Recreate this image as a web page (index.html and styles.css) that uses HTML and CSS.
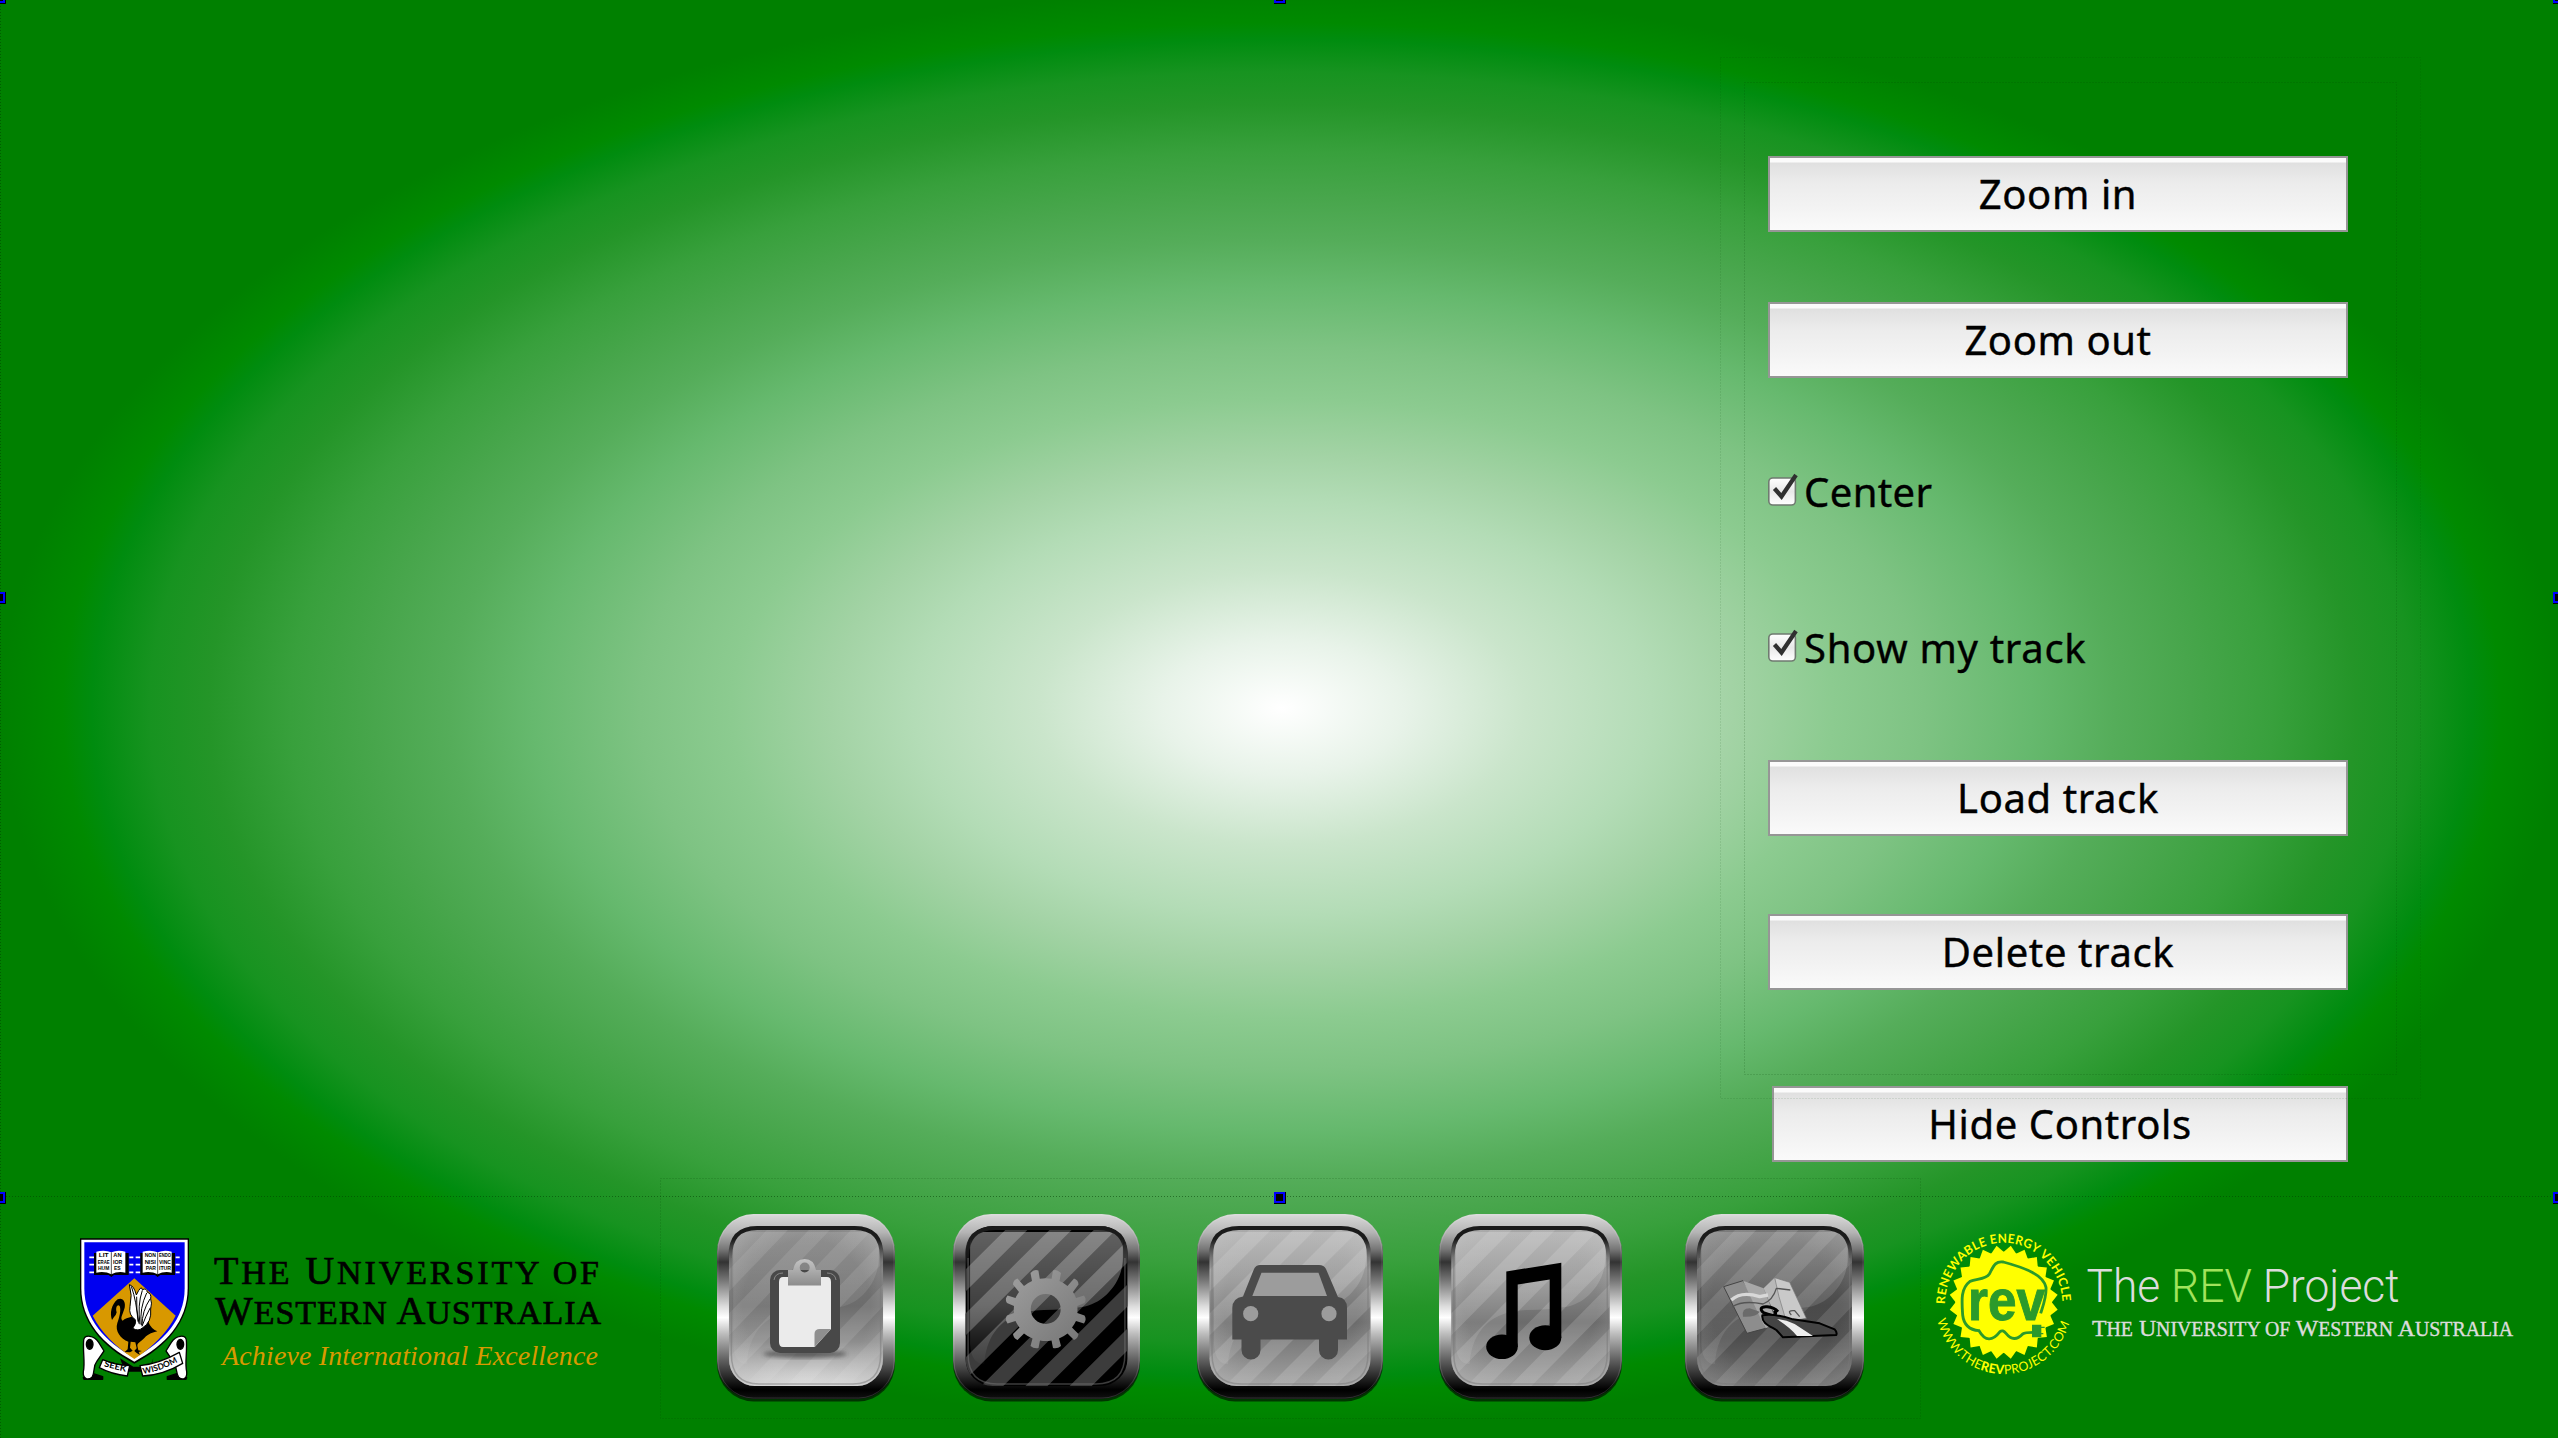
FILE: index.html
```html
<!DOCTYPE html>
<html lang="en">
<head>
<meta charset="utf-8">
<title>REV Project</title>
<link rel="stylesheet" href="styles.css">
</head>
<body>
<svg class="defs" width="0" height="0" aria-hidden="true">
  <defs>
    <linearGradient id="metal" x1="0" y1="0" x2="0" y2="1">
      <stop offset="0" stop-color="#dadada"/><stop offset=".1" stop-color="#b4b4b4"/>
      <stop offset=".19" stop-color="#777"/><stop offset=".26" stop-color="#333"/>
      <stop offset=".36" stop-color="#777"/><stop offset=".5" stop-color="#ddd"/>
      <stop offset=".56" stop-color="#fff"/><stop offset=".65" stop-color="#bbb"/>
      <stop offset=".78" stop-color="#666"/><stop offset=".9" stop-color="#1c1c1c"/>
      <stop offset=".95" stop-color="#000"/><stop offset="1" stop-color="#111"/>
    </linearGradient>
    <linearGradient id="face1" x1="0" y1="0" x2="0" y2="1">
      <stop offset="0" stop-color="#808080"/><stop offset=".5" stop-color="#6c6c6c"/>
      <stop offset=".72" stop-color="#8d8d8d"/><stop offset="1" stop-color="#e6e6e6"/>
    </linearGradient>
    <linearGradient id="face3" x1="0" y1="0" x2="0" y2="1">
      <stop offset="0" stop-color="#a8a8a8"/><stop offset=".35" stop-color="#8c8c8c"/>
      <stop offset=".6" stop-color="#6b6b6b"/><stop offset="1" stop-color="#a2a2a2"/>
    </linearGradient>
    <linearGradient id="face5" x1="0" y1="0" x2="0" y2="1">
      <stop offset="0" stop-color="#747474"/><stop offset=".5" stop-color="#4a4a4a"/>
      <stop offset=".7" stop-color="#4e4e4e"/><stop offset="1" stop-color="#707070"/>
    </linearGradient>
    <radialGradient id="rim" cx=".5" cy=".5" r=".68">
      <stop offset=".6" stop-color="#aaa" stop-opacity="0"/><stop offset="1" stop-color="#bbb" stop-opacity=".6"/>
    </radialGradient>
    <linearGradient id="gloss" x1="0" y1="0" x2="0" y2="1">
      <stop offset="0" stop-color="#fff" stop-opacity=".26"/><stop offset="1" stop-color="#fff" stop-opacity=".1"/>
    </linearGradient>
    <linearGradient id="glossDark" x1="0" y1="0" x2="0" y2="1">
      <stop offset="0" stop-color="#fff" stop-opacity=".38"/><stop offset=".55" stop-color="#fff" stop-opacity=".25"/><stop offset="1" stop-color="#fff" stop-opacity=".02"/>
    </linearGradient>
    <linearGradient id="lipFade" gradientUnits="userSpaceOnUse" x1="0" y1="12" x2="0" y2="56">
      <stop offset="0" stop-color="#1a1a1a"/><stop offset=".3" stop-color="#1a1a1a"/><stop offset="1" stop-color="#444" stop-opacity="0"/>
    </linearGradient>
    <linearGradient id="steel" x1="0" y1="0" x2="1" y2="1">
      <stop offset="0" stop-color="#a0a0a0"/><stop offset="1" stop-color="#747474"/>
    </linearGradient>
    <linearGradient id="clip" x1="0" y1="0" x2="0" y2="1">
      <stop offset="0" stop-color="#c4c4c4"/><stop offset="1" stop-color="#8c8c8c"/>
    </linearGradient>
    <linearGradient id="box" x1="0" y1="0" x2="0" y2="1">
      <stop offset="0" stop-color="#fff"/><stop offset=".5" stop-color="#e8e8e8"/><stop offset="1" stop-color="#fff"/>
    </linearGradient>
    <filter id="soft" x="-20%" y="-20%" width="140%" height="140%"><feGaussianBlur stdDeviation="2"/></filter>
    <clipPath id="faceClip"><rect x="12.5" y="12" width="161" height="160" rx="27"/></clipPath>
    <g id="bezel">
      <rect x="0" y="1.5" width="186" height="186" rx="38" fill="#000" opacity=".6"/>
      <rect width="186" height="185" rx="38" fill="url(#metal)"/>
      <rect x="1" y="1" width="184" height="183" rx="37" fill="none" stroke="#fff" stroke-opacity=".14"/>
    </g>
    <path id="stripes" d="M-60 172L100 12h22L-38 172zM-16 172L144 12h22L6 172zM28 172L188 12h22L50 172zM72 172L232 12h22L94 172zM116 172L276 12h22L138 172zM-104 172L56 12h22L-82 172z"/>
    <path id="glossShape" d="M17 18H169V44C169 68 150 90 128 93Q110 96 90 96C55 97 34 114 31 150Q18 150 17 130z"/>
    <g id="lip">
      <path d="M14 56V42Q14 14 42 14H144Q172 14 172 42V56" fill="none" stroke="url(#lipFade)" stroke-width="4"/>
      <path d="M15 44V140Q15 170 44 170H142Q171 170 171 140V44" fill="none" stroke="#777" stroke-opacity=".5" stroke-width="1.5"/>
    </g>
    <g id="check">
      <rect x=".8" y="5" width="26.6" height="27" rx="4" fill="url(#box)" stroke="#6f7a70" stroke-width="1.6"/>
      <path d="M6.5 15.5L13.5 23.5L28 2" fill="none" stroke="#303030" stroke-width="4.2"/>
    </g>
  </defs>
</svg>

<main class="stage">
  <form class="controls">
    <button class="btn" type="button">Zoom in</button>
    <button class="btn zoom-out" type="button">Zoom out</button>
    <label class="option center"><svg width="32" height="34"><use href="#check"/></svg><span>Center</span></label>
    <label class="option show"><svg width="32" height="34"><use href="#check"/></svg><span class="show-text">Show my track</span></label>
    <button class="btn load" type="button">Load track</button>
    <button class="btn delete" type="button">Delete track</button>
    <button class="btn hide" type="button">Hide Controls</button>
  </form>
</main>

<footer class="bar">
  <svg class="uwa" width="560" height="190" viewBox="0 0 560 190">
    <g transform="translate(10 15) scale(.33333)">
      <path d="M150 400L190 425H240L250 400L240 440H165z" fill="#000"/>
      <!-- ribbon -->
      <g fill="#fff" stroke="#000" stroke-width="4" stroke-linejoin="round">
        <path d="M40 458L70 446L98 455V463H42z" fill="#000"/><path d="M350 458L320 446L292 455V463H348z" fill="#000"/>
        <path d="M41 345C44 328 72 330 86 352L102 378L80 410C68 425 76 440 66 457C52 468 38 460 40 440C46 415 38 380 41 345z"/>
        <path d="M349 345C346 328 318 330 304 352L288 378L310 410C322 425 316 440 326 457C340 468 352 460 350 440C344 415 352 380 349 345z"/>
        <path d="M98 404Q135 420 179 422L172 453Q125 448 88 428z"/>
        <path d="M210 422Q270 415 328 382L338 415Q280 450 218 453z"/>
        <ellipse cx="59" cy="358" rx="10" ry="15" fill="#000"/><ellipse cx="331" cy="358" rx="10" ry="15" fill="#000"/>
      </g>
      <path d="M30 40H357V190C357 290 290 365 193 416C95 365 30 290 30 190z" fill="#000"/>
      <path d="M34 44H353V190C353 288 288 360 193 410C98 360 34 288 34 190z" fill="#fff"/>
      <path d="M43 52H344V190C344 282 282 350 193 399C104 350 43 282 43 190z" fill="#0000f0"/>
      <path d="M193 160L317 272Q280 345 193 402Q105 345 68 272z" fill="#d89800"/>
      <!-- books -->
      <g id="book">
        <path d="M58 97h14M58 119h14M58 142h14M178 97h12M178 119h12M178 142h12" stroke="#fff" stroke-width="5"/>
        <path d="M72 84H176V150H132L124 156L116 150H72z" fill="#000"/>
        <path d="M79 80Q105 74 124 82Q143 74 166 80V143Q143 138 124 148Q105 138 79 143z" fill="#fff"/>
        <path d="M124 82V148" stroke="#000" stroke-width="2"/>
      </g>
      <use href="#book" x="139"/>
      <g class="book-text">
        <text x="86" y="97" textLength="30" lengthAdjust="spacingAndGlyphs">LIT</text><text x="130" y="97" textLength="25" lengthAdjust="spacingAndGlyphs">AN</text>
        <text x="83" y="117" textLength="36" lengthAdjust="spacingAndGlyphs">ERAE</text><text x="129" y="117" textLength="28" lengthAdjust="spacingAndGlyphs">IOR</text>
        <text x="84" y="136" textLength="34" lengthAdjust="spacingAndGlyphs">HUM</text><text x="132" y="136" textLength="20" lengthAdjust="spacingAndGlyphs">ES</text>
        <text x="224" y="97" textLength="34" lengthAdjust="spacingAndGlyphs">NON</text><text x="267" y="97" textLength="36" lengthAdjust="spacingAndGlyphs">ENDO</text>
        <text x="224" y="117" textLength="34" lengthAdjust="spacingAndGlyphs">NISI</text><text x="267" y="117" textLength="36" lengthAdjust="spacingAndGlyphs">VINC</text>
        <text x="227" y="136" textLength="31" lengthAdjust="spacingAndGlyphs">PAR</text><text x="267" y="136" textLength="36" lengthAdjust="spacingAndGlyphs">ITUR</text>
      </g>
      <!-- swan -->
      <path d="M126 285C119 265 124 238 143 223C158 216 168 230 164 248C158 270 149 279 158 287C164 280 175 278 185 275L235 290Q242 310 262 319Q240 324 228 334C215 350 202 353 202 362L205 376L216 378L206 381L210 390L200 384L193 378L200 370L196 352L182 350L180 368L188 377L180 382L164 381L173 373L175 350C152 342 134 318 142 294C148 278 154 255 149 243C141 236 136 250 140 262Q138 272 132 276z" fill="#000"/>
      <path d="M178 179Q192 182 199 210Q214 178 217 194Q230 188 232 202Q245 205 242 222Q247 232 242 252Q246 292 217 309Q205 320 188 310Q200 295 196 284Q175 270 180 245Q188 210 178 179z" fill="#fff" stroke="#000" stroke-width="3"/>
      <path d="M184 184Q200 230 204 290M200 215Q198 255 207 296M217 196Q202 240 210 298M230 204Q208 250 214 300M240 222Q216 258 216 302M241 248Q226 275 216 304" fill="none" stroke="#000" stroke-width="3"/>
      <g class="motto">
        <text transform="translate(101 424) rotate(14)" textLength="68" lengthAdjust="spacingAndGlyphs">SEEK</text>
        <path id="wisPath" d="M220 447Q275 438 332 406" fill="none"/>
        <text><textPath href="#wisPath">WISDOM</textPath></text>
      </g>
    </g>
    <text class="uwa-name" x="154" y="73.5" textLength="385">T<tspan class="sc">HE</tspan> U<tspan class="sc">NIVERSITY OF</tspan></text>
    <text class="uwa-name" x="155" y="114" textLength="386">W<tspan class="sc">ESTERN</tspan> A<tspan class="sc">USTRALIA</tspan></text>
    <text class="uwa-tag" x="162" y="155" textLength="376">Achieve International Excellence</text>
  </svg>

  <nav class="tiles">
    <svg width="178" height="190" viewBox="0 0 178 190">
      <svg width="178" height="186" viewBox="0 0 186 186" preserveAspectRatio="none" overflow="visible">
        <use href="#bezel"/>
        <g clip-path="url(#faceClip)">
          <rect x="12" y="11" width="163" height="162" fill="url(#face1)"/>
          <use href="#stripes" fill="#fff" opacity=".1"/>
          <rect x="12" y="11" width="163" height="162" fill="url(#rim)"/>
          <use href="#glossShape" fill="url(#gloss)" opacity=".5"/>
        </g>
        <use href="#lip"/>
      </svg>
      <ellipse cx="88" cy="140" rx="42" ry="4" fill="#333" opacity=".6" filter="url(#soft)"/>
      <rect x="53" y="56" width="70" height="83" rx="10" fill="#484848"/>
      <path d="M57 66Q58 59 66 59M119 66Q118 59 110 59" stroke="#888" fill="none"/>
      <path d="M66 63H110Q114 63 114 68V115L97.700 133H66Q62 133 62 128V68Q62 63 66 63z" fill="#ebebeb"/>
      <path d="M114 115H103Q97.500 115 97.500 120V133z" fill="#8f8f8f"/>
      <path fill-rule="evenodd" d="M71 56H76Q78 45 87.700 45Q97 45 99 56H104V71.500H71zM87.700 48.500A5 5 0 1 0 87.700 58.500A5 5 0 1 0 87.700 48.500z" fill="url(#clip)"/>
    </svg>
    <svg class="t2" width="187" height="190" viewBox="0 0 187 190">
      <mask id="hole"><rect width="187" height="190" fill="#fff"/><circle cx="92.700" cy="95" r="15" fill="#000"/></mask>
      <svg width="187" height="186" viewBox="0 0 186 186" preserveAspectRatio="none" overflow="visible">
        <use href="#bezel"/>
        <g clip-path="url(#faceClip)">
          <rect x="12" y="11" width="163" height="162" fill="#000"/>
          <use href="#stripes" fill="#3c3c3c"/>
          <use href="#glossShape" fill="url(#glossDark)"/>
        </g>
        <use href="#lip"/>
      </svg>
      <g fill="url(#steel)" mask="url(#hole)">
        <path d="M85.400 56.500L86.800 64.800A31 31 0 0 1 98.600 64.800L100 56.500Q103.500 55 108 59L106.500 67A31 31 0 0 1 114.500 72L121 64.500Q125.500 66 125.500 70.500L120 78A31 31 0 0 1 123 84L131 81.500Q134 85.500 131.500 89L124.300 92A31 31 0 0 1 124.300 99L131.500 101.500Q134 105.500 131 109.500L123 107A31 31 0 0 1 119 113.500L125.500 120Q125 124.500 121 126L114.500 119.500A31 31 0 0 1 106 124.500L108 132Q104.500 135 100 134L98.500 126.500A31 31 0 0 1 87 126.500L85.500 134Q81 135 77.500 132L79.500 124.500A31 31 0 0 1 71 119.500L64.500 126Q60.500 124.500 60 120L66.500 113.500A31 31 0 0 1 62.500 107L54.500 109.500Q51.500 105.500 54 101.500L61 99A31 31 0 0 1 61 92L54 89Q51.500 85.500 54.500 81.500L62.500 84A31 31 0 0 1 66 78L60 70.500Q60 66 64.500 64.500L71 72A31 31 0 0 1 79 67L77.500 59Q81 55 85.400 56.500z"/>
      </g>
    </svg>
    <svg class="t3" width="186" height="190" viewBox="0 0 186 190">
      <use href="#bezel"/>
      <g clip-path="url(#faceClip)">
        <rect x="12" y="11" width="163" height="162" fill="url(#face3)"/>
        <use href="#stripes" fill="#fff" opacity=".15"/>
        <rect x="12" y="11" width="163" height="162" fill="url(#rim)"/>
        <use href="#glossShape" fill="url(#gloss)" opacity=".8"/>
      </g>
      <use href="#lip"/>
      <path d="M63 51H122Q127 51 129 55L141 83Q150 84 150 94V125.500H141V136A9.500 9.500 0 0 1 122 136V125.500H63.500V136A9.500 9.500 0 0 1 44.500 136V125.500H35.300V94Q35.500 84 46 82.500L57 55Q59 51 63 51z" fill="#4b4b4b"/>
      <path d="M64.500 58.700H121.500L130 82H55.300z" fill="#9c9c9c"/>
      <circle cx="53.700" cy="99.700" r="7.600" fill="#9c9c9c"/><circle cx="132" cy="99.700" r="7.600" fill="#9c9c9c"/>
    </svg>
    <svg class="t4" width="183" height="190" viewBox="0 0 183 190">
      <svg width="183" height="186" viewBox="0 0 186 186" preserveAspectRatio="none" overflow="visible">
        <use href="#bezel"/>
        <g clip-path="url(#faceClip)">
          <rect x="12" y="11" width="163" height="162" fill="url(#face3)"/>
          <use href="#stripes" fill="#fff" opacity=".15"/>
          <rect x="12" y="11" width="163" height="162" fill="url(#rim)"/>
          <use href="#glossShape" fill="url(#gloss)" opacity=".8"/>
        </g>
        <use href="#lip"/>
      </svg>
      <path d="M67.300 57.500L122.300 48.700V124H110.700V65.500L78.700 70.500V133H67.300z"/>
      <ellipse cx="63" cy="132.700" rx="15.800" ry="12.300"/><ellipse cx="106.300" cy="123.700" rx="16" ry="12.500"/>
    </svg>
    <svg class="t5" width="179" height="190" viewBox="0 0 179 190">
      <svg width="179" height="186" viewBox="0 0 186 186" preserveAspectRatio="none" overflow="visible">
        <use href="#bezel"/>
        <g clip-path="url(#faceClip)">
          <rect x="12" y="11" width="163" height="162" fill="url(#face5)"/>
          <use href="#stripes" fill="#fff" opacity=".12"/>
          <rect x="12" y="11" width="163" height="162" fill="url(#rim)" opacity=".5"/>
          <use href="#glossShape" fill="url(#gloss)" opacity=".7"/>
        </g>
        <use href="#lip"/>
      </svg>
      <g transform="scale(.33333) translate(-76 -42)" stroke-linejoin="round">
        <path d="M192 260L250 242L305 330L318 385L262 400z" fill="#8d8d8d" stroke="#444" stroke-width="3"/>
        <path d="M250 242L312 265L352 370L318 385L298 345z" fill="#a8a8a8"/>
        <path d="M312 265L345 233L372 310L380 360H352z" fill="#b8b8b8"/>
        <path d="M345 233L390 247L440 355L380 365L358 290z" fill="#c9c9c9" stroke="#777" stroke-width="2"/>
        <path d="M250 350Q245 325 270 325L300 335Q290 352 250 350z" fill="#6b6b6b"/>
        <path d="M215 300Q245 272 300 290L325 285" fill="none" stroke="#d8d8d8" stroke-width="10"/>
        <path d="M218 320Q250 300 310 312Q340 300 350 265L392 270M395 345Q380 330 405 332L420 350" fill="none" stroke="#555" stroke-width="4"/>
        <path d="M355 335C340 318 300 315 305 330C310 345 330 340 340 348C350 342 350 340 344 332" fill="none" stroke="#000" stroke-width="9"/>
        <path d="M308 346C330 342 360 345 400 358L480 370L525 388Q533 396 530 405L370 412L350 390C330 378 305 370 308 346z" fill="#444" stroke="#000" stroke-width="6"/>
        <path d="M352 357Q380 360 405 372L460 408H412Q395 385 352 357z" fill="#eee"/>
      </g>
    </svg>
  </nav>

  <svg class="rev" width="620" height="190" viewBox="0 0 620 190">
    <g transform="translate(83.700 92.300) scale(.955 1)">
      <circle r="50.500" fill="#ff0"/>
      <g fill="#ff0">
        <g id="ray3"><path id="ray" d="M-7.500 -49L0 -57L7.500 -49L0 0z" transform="rotate(7.500)"/><use href="#ray" transform="rotate(15)"/><use href="#ray" transform="rotate(30)"/></g>
        <use href="#ray3" transform="rotate(45)"/><use href="#ray3" transform="rotate(90)"/><use href="#ray3" transform="rotate(135)"/><use href="#ray3" transform="rotate(180)"/><use href="#ray3" transform="rotate(225)"/><use href="#ray3" transform="rotate(270)"/><use href="#ray3" transform="rotate(315)"/>
      </g>
      <path id="arcTop" d="M-61.500 2A61.500 61.500 0 0 1 61.500 2" fill="none"/>
      <path id="arcBottom" d="M-69.500 18A71.800 71.800 0 0 0 69.500 18" fill="none"/>
      <text class="ring" textLength="190"><textPath href="#arcTop">RENEWABLE ENERGY VEHICLE</textPath></text>
      <text class="ring thin" textLength="186"><textPath href="#arcBottom">WWW.THE<tspan class="heavy">REV</tspan>PROJECT.COM</textPath></text>
    </g>
    <text class="rev-word" x="48" y="109.500" textLength="77" lengthAdjust="spacingAndGlyphs">rev</text>
    <g transform="translate(-260 -10) scale(.33333)" fill="none" stroke="#2b9a2b" stroke-width="8.500">
      <path d="M1142 340C1150 315 1160 290 1158 262C1150 225 1100 205 1030 186C1005 182 1000 200 988 222C978 238 952 236 930 244C902 265 905 300 908 345C912 380 932 390 957 392Q985 440 1020 395Q1028 388 1038 400Q1062 430 1088 402Q1095 397 1120 397"/>
      <path d="M1118 376H1142V410H1118zM1140 382H1154M1140 401H1150" fill="#2b9a2b" stroke-width="4"/>
    </g>
    <text class="rev-title" x="166.500" y="92.300" textLength="313" lengthAdjust="spacingAndGlyphs">The <tspan class="lime">REV</tspan> Project</text>
    <text class="rev-sub" x="172" y="126.300" textLength="421" lengthAdjust="spacingAndGlyphs">T<tspan class="sc2">HE</tspan> U<tspan class="sc2">NIVERSITY OF</tspan> W<tspan class="sc2">ESTERN</tspan> A<tspan class="sc2">USTRALIA</tspan></text>
  </svg>
</footer>

<!-- layout guides and selection handles drawn over the scene -->
<svg class="guides" width="2558" height="1438" viewBox="0 0 2558 1438">
  <g fill="none" stroke="#003c00" stroke-opacity=".3" stroke-dasharray="1 2">
    <path d="M.5 0V1438M0 1196.500H2558" stroke-opacity=".5"/>
    <path d="M1744.500 82.500H2396.500V1074.500H1744.500z"/>
    <path d="M1720.500 57.500H2420.500V1098.500H1720.500z" stroke-opacity=".2"/>
    <path d="M660.500 1178.500H1920.500V1418.500H660.500z"/>
  </g>
  <g>
    <g id="handle"><rect x="1274" y="1192" width="12" height="12"/><rect x="1275" y="1193" width="9" height="9" stroke="#00f" stroke-width="2"/></g>
    <use href="#handle" y="-1200"/><use href="#handle" x="-1280"/><use href="#handle" x="-1280" y="-600"/><use href="#handle" x="-1280" y="-1200"/>
    <use href="#handle" x="1279"/><use href="#handle" x="1279" y="-600"/><use href="#handle" x="1279" y="-1200"/>
  </g>
</svg>
</body>
</html>
```
FILE: styles.css
```css
* { box-sizing: border-box; }

body {
  margin: 0;
  width: 2558px;
  height: 1438px;
  overflow: hidden;
  position: relative;
  display: flex;
  flex-direction: column;
  font-family: "Noto Sans", "Open Sans", sans-serif;
  background: radial-gradient(ellipse 1281px 720px at 1282px 708px,
    #fff 0%, #e8f3e9 9.4%, #cae5cb 19%, #b3dcb6 28.8%, #a3d3a5 35.2%,
    #8ccb90 43%, #7ec383 50.1%, #66b96e 58.5%, #55ad5a 65%, #48a64c 70.9%,
    #38a03c 77.4%, #249528 83.8%, #179320 88.4%, #008c0f 92.9%,
    #008a00 95.2%, #008000 100%);
}

svg { display: block; flex: none; }
.defs { position: absolute; }

.stage { height: 1197px; flex: none; display: flex; justify-content: flex-end; padding: 156px 210px 0 0; }
.controls { width: 580px; display: flex; flex-direction: column; }

.btn {
  height: 76px;
  flex: none;
  width: 100%;
  margin: 0;
  padding: 0;
  border: 2px solid #969696;
  border-radius: 0;
  background: linear-gradient(#fbfbfb 0 4px, #e0e0e0 5px, #ececec 35%, #f2f2f2 65%, #fafafa);
  color: #000;
  font: 40px/72px "Noto Sans", "Open Sans", sans-serif;
  letter-spacing: .6px;
  text-align: center;
  -webkit-text-stroke: .4px #000;
}
.zoom-out { margin-top: 70px; }
.load { margin-top: 96px; }
.delete { margin-top: 78px; }
.hide { margin-top: 96px; width: 576px; align-self: flex-end; }

.option {
  display: flex;
  align-items: center;
  height: 32px;
  font-size: 40px;
  letter-spacing: .4px;
  color: #000;
  -webkit-text-stroke: .4px #000;
}
.option svg { margin: -4px 4px 0 0; }
.option span { line-height: 32px; white-space: nowrap; }
.option .show-text { letter-spacing: .7px; }
.center { margin-top: 98px; }
.show { margin-top: 124px; }

.bar { flex: 1; display: flex; align-items: flex-start; padding: 13px 0 0 60px; }
.tiles { display: flex; margin: 4px 0 0 97px; }
.t2 { margin-left: 58px; }
.t3 { margin-left: 57px; }
.t4 { margin-left: 56px; }
.t5 { margin-left: 63px; }
.rev { margin-left: 56px; }

.uwa-name { font: 40px "Liberation Serif", serif; fill: #000; stroke: #000; stroke-width: .7; }
.sc { font-size: 34px; }
.uwa-tag { font: italic 28px "Liberation Serif", serif; fill: #d89a00; }
.book-text { font: bold 18px "Liberation Sans", sans-serif; }
.motto { font: bold 25px Lato, sans-serif; }

.ring { font: bold 12.6px Lato, sans-serif; fill: #ff0; }
.thin { font-weight: 400; font-size: 13px; }
.heavy { font-weight: 900; }
.rev-word { font: bold 58px "Liberation Sans", sans-serif; fill: #2b9a2b; stroke: #2b9a2b; stroke-width: 1; }
.rev-title { font: 300 46.5px Roboto, sans-serif; fill: #dcdcdc; }
.lime { fill: #a2e35c; }
.rev-sub { font: 24px "Liberation Serif", serif; fill: #dcdcdc; stroke: #dcdcdc; stroke-width: .4; }
.sc2 { font-size: 20px; }

.guides { position: absolute; inset: 0; pointer-events: none; }
```
